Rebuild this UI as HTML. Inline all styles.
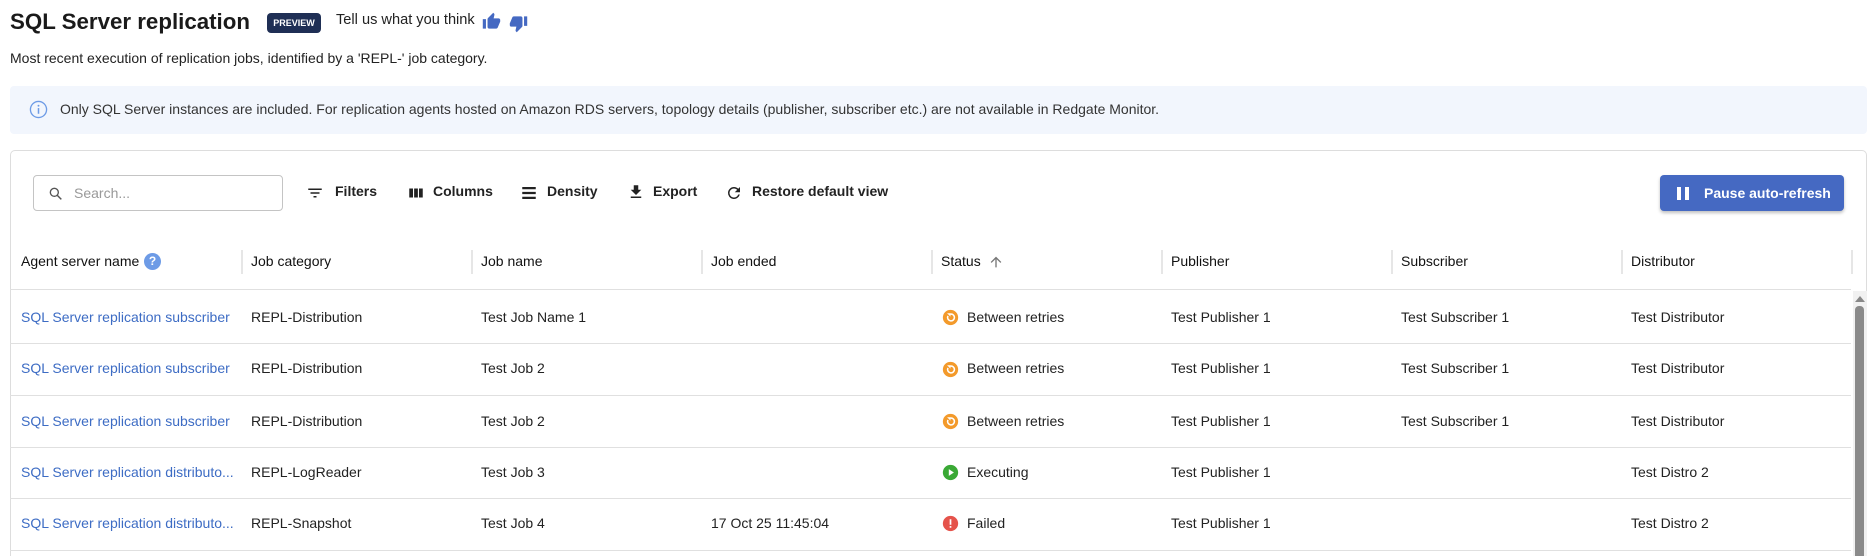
<!DOCTYPE html>
<html><head><meta charset="utf-8"><style>
*{box-sizing:border-box;margin:0;padding:0}
html{width:1869px;height:556px;overflow:hidden}
body{width:1869px;height:556px;overflow:hidden;background:#fff;font-family:"Liberation Sans",sans-serif;color:#222;position:relative}
.a{position:absolute;white-space:nowrap}
.title{left:10px;top:9px;font-size:22.3px;font-weight:bold;color:#1a1a1a}
.badge{left:267px;top:13px;width:54px;height:20px;background:#1f2f55;color:#fff;font-size:9px;font-weight:bold;border-radius:4px;text-align:center;line-height:20px}
.tell{left:336px;top:12px;font-size:14.6px;color:#222}
.sub{left:10px;top:50px;font-size:14px;color:#222}
.info{left:10px;top:86px;width:1857px;height:48px;background:#f2f6fd;border-radius:4px}
.info span{position:absolute;left:50px;top:15px;font-size:14px;color:#333}
.card{left:10px;top:150px;width:1857px;height:406px;border:1px solid #ddd;border-bottom:none;border-radius:5px 5px 0 0}
.search{left:33px;top:175px;width:250px;height:36px;border:1px solid #c4c4c4;border-radius:4px}
.search span{position:absolute;left:40px;top:9px;font-size:14px;color:#999}
.tb{top:183px;font-size:14px;font-weight:bold;color:#222}
.btn{left:1660px;top:175px;width:184px;height:36px;background:#4569c2;border-radius:4px;box-shadow:0 2px 3px rgba(0,0,0,.25);color:#fff;font-size:14px;font-weight:bold}
.hd{top:253px;font-size:14px;color:#111}
.sep{top:250px;width:2px;height:24px;background:#e6e6e6}
.hl{left:10px;width:1841px;height:1px;background:#e0e0e0}
.c{font-size:14px;color:#222}
.lnk{color:#3d6cc4}
</style></head><body>
<div class="a title">SQL Server replication</div>
<div class="a badge">PREVIEW</div>
<div class="a tell">Tell us what you think</div>
<svg class="a" style="left:482px;top:12px" width="19" height="19" viewBox="0 0 24 24"><path fill="#4569c2" d="M1 21h4V9H1v12zm22-11c0-1.1-.9-2-2-2h-6.3l1-4.6v-.3c0-.4-.2-.8-.4-1.1L14.2 1 7.6 7.6C7.2 8 7 8.5 7 9v10c0 1.1.9 2 2 2h9c.8 0 1.5-.5 1.8-1.2l3-7.1c.1-.2.2-.5.2-.7v-2z"/></svg>
<svg class="a" style="left:509px;top:14px" width="19" height="19" viewBox="0 0 24 24"><path fill="#4569c2" d="M15 3H6c-.8 0-1.5.5-1.8 1.2l-3 7.1c-.1.2-.2.5-.2.7v2c0 1.1.9 2 2 2h6.3l-1 4.6v.3c0 .4.2.8.4 1.1l1.1 1 6.6-6.6c.4-.4.6-.9.6-1.4V5c0-1.1-.9-2-2-2zm4 0v12h4V3h-4z"/></svg>
<div class="a sub">Most recent execution of replication jobs, identified by a 'REPL-' job category.</div>
<div class="a info"><svg style="position:absolute;left:19px;top:14px" width="19" height="19" viewBox="0 0 20 20"><circle cx="10" cy="10" r="8.5" fill="none" stroke="#6d9be6" stroke-width="1.4"/><rect x="9.2" y="8.5" width="1.6" height="6" fill="#6d9be6"/><circle cx="10" cy="6" r="1" fill="#6d9be6"/></svg><span>Only SQL Server instances are included. For replication agents hosted on Amazon RDS servers, topology details (publisher, subscriber etc.) are not available in Redgate Monitor.</span></div>
<div class="a card"></div>
<div class="a search"><svg style="position:absolute;left:14px;top:10px" width="16" height="16" viewBox="0 0 24 24"><circle cx="9.5" cy="9.5" r="6" fill="none" stroke="#555" stroke-width="2"/><path d="M14 14l6 6" stroke="#555" stroke-width="2.2"/></svg><span>Search...</span></div>
<svg class="a" style="left:306px;top:184px" width="18" height="18" viewBox="0 0 24 24"><path fill="#222" d="M3 6h18v2H3zM6 11h12v2H6zM10 16h4v2h-4z"/></svg>
<div class="a tb" style="left:335px">Filters</div>
<svg class="a" style="left:407px;top:184px" width="18" height="18" viewBox="0 0 24 24"><path fill="#222" d="M3 6h5v12H3zM9.5 6h5v12h-5zM16 6h5v12h-5z"/></svg>
<div class="a tb" style="left:433px">Columns</div>
<svg class="a" style="left:520px;top:184px" width="18" height="18" viewBox="0 0 24 24"><path fill="#222" d="M3 4h18v3H3zM3 10.5h18v3H3zM3 17h18v3H3z"/></svg>
<div class="a tb" style="left:547px">Density</div>
<svg class="a" style="left:627px;top:183px" width="18" height="18" viewBox="0 0 24 24"><path fill="#222" d="M19 9h-4V3H9v6H5l7 7 7-7zM5 18v2h14v-2z"/></svg>
<div class="a tb" style="left:653px">Export</div>
<svg class="a" style="left:725px;top:184px" width="18" height="18" viewBox="0 0 24 24"><path fill="#222" d="M17.65 6.35A7.96 7.96 0 0 0 12 4a8 8 0 1 0 7.730 10h-2.08A6 6 0 1 1 12 6c1.66 0 3.14.69 4.22 1.78L13 11h7V4l-2.35 2.35z"/></svg>
<div class="a tb" style="left:752px">Restore default view</div>
<div class="a btn"><span style="position:absolute;left:17px;top:12px;width:4px;height:13px;background:#fff"></span><span style="position:absolute;left:25px;top:12px;width:4px;height:13px;background:#fff"></span><span style="position:absolute;left:44px;top:10px">Pause auto-refresh</span></div>

<div class="a hd" style="left:21px">Agent server name</div>
<div class="a" style="left:144px;top:253px;width:17px;height:17px;border-radius:50%;background:#6d9be6;color:#fff;font-size:12px;font-weight:bold;text-align:center;line-height:17px">?</div>
<div class="a sep" style="left:241px"></div><div class="a hd" style="left:251px">Job category</div>
<div class="a sep" style="left:471px"></div><div class="a hd" style="left:481px">Job name</div>
<div class="a sep" style="left:701px"></div><div class="a hd" style="left:711px">Job ended</div>
<div class="a sep" style="left:931px"></div><div class="a hd" style="left:941px">Status</div>
<svg class="a" style="left:988px;top:254px" width="16" height="16" viewBox="0 0 24 24"><path fill="#777" d="M4 12l1.4 1.4L11 7.8V20h2V7.8l5.6 5.6L20 12l-8-8z"/></svg>
<div class="a sep" style="left:1161px"></div><div class="a hd" style="left:1171px">Publisher</div>
<div class="a sep" style="left:1391px"></div><div class="a hd" style="left:1401px">Subscriber</div>
<div class="a sep" style="left:1621px"></div><div class="a hd" style="left:1631px">Distributor</div>
<div class="a sep" style="left:1851px"></div>
<div class="a hl" style="top:289px"></div>
<div class="a hl" style="top:343px"></div>
<div class="a hl" style="top:395px"></div>
<div class="a hl" style="top:447px"></div>
<div class="a hl" style="top:498px"></div>
<div class="a hl" style="top:550px"></div>
<div class="a" style="left:1853px;top:291px;width:14px;height:265px;background:#f1f1f1"></div>
<div class="a" style="left:1855px;top:296px;width:0;height:0;border-left:5px solid transparent;border-right:5px solid transparent;border-bottom:6px solid #888"></div>
<div class="a" style="left:1855px;top:306px;width:9px;height:250px;background:#8a8a8a;border-radius:4px 4px 0 0"></div>

<div class="a c lnk" style="left:21px;top:309px">SQL Server replication subscriber</div>
<div class="a c" style="left:251px;top:309px">REPL-Distribution</div>
<div class="a c" style="left:481px;top:309px">Test Job Name 1</div>
<div class="a c" style="left:967px;top:309px">Between retries</div>
<div class="a c" style="left:1171px;top:309px">Test Publisher 1</div>
<div class="a c" style="left:1401px;top:309px">Test Subscriber 1</div>
<div class="a c" style="left:1631px;top:309px">Test Distributor</div>

<div class="a c lnk" style="left:21px;top:360px">SQL Server replication subscriber</div>
<div class="a c" style="left:251px;top:360px">REPL-Distribution</div>
<div class="a c" style="left:481px;top:360px">Test Job 2</div>
<div class="a c" style="left:967px;top:360px">Between retries</div>
<div class="a c" style="left:1171px;top:360px">Test Publisher 1</div>
<div class="a c" style="left:1401px;top:360px">Test Subscriber 1</div>
<div class="a c" style="left:1631px;top:360px">Test Distributor</div>

<div class="a c lnk" style="left:21px;top:413px">SQL Server replication subscriber</div>
<div class="a c" style="left:251px;top:413px">REPL-Distribution</div>
<div class="a c" style="left:481px;top:413px">Test Job 2</div>
<div class="a c" style="left:967px;top:413px">Between retries</div>
<div class="a c" style="left:1171px;top:413px">Test Publisher 1</div>
<div class="a c" style="left:1401px;top:413px">Test Subscriber 1</div>
<div class="a c" style="left:1631px;top:413px">Test Distributor</div>

<div class="a c lnk" style="left:21px;top:464px">SQL Server replication distributo...</div>
<div class="a c" style="left:251px;top:464px">REPL-LogReader</div>
<div class="a c" style="left:481px;top:464px">Test Job 3</div>
<div class="a c" style="left:967px;top:464px">Executing</div>
<div class="a c" style="left:1171px;top:464px">Test Publisher 1</div>
<div class="a c" style="left:1631px;top:464px">Test Distro 2</div>

<div class="a c lnk" style="left:21px;top:515px">SQL Server replication distributo...</div>
<div class="a c" style="left:251px;top:515px">REPL-Snapshot</div>
<div class="a c" style="left:481px;top:515px">Test Job 4</div>
<div class="a c" style="left:711px;top:515px">17 Oct 25 11:45:04</div>
<div class="a c" style="left:967px;top:515px">Failed</div>
<div class="a c" style="left:1171px;top:515px">Test Publisher 1</div>
<div class="a c" style="left:1631px;top:515px">Test Distro 2</div>

<svg class="a" style="left:942px;top:309px" width="17" height="17" viewBox="0 0 20 20"><circle cx="10" cy="10" r="9" fill="#f39a2b"/><path d="M7 8.2A4 4 0 1 0 10 6" fill="none" stroke="#fff" stroke-width="1.8"/><path d="M6 5h4v4z" fill="#fff"/></svg>
<svg class="a" style="left:942px;top:361px" width="17" height="17" viewBox="0 0 20 20"><circle cx="10" cy="10" r="9" fill="#f39a2b"/><path d="M7 8.2A4 4 0 1 0 10 6" fill="none" stroke="#fff" stroke-width="1.8"/><path d="M6 5h4v4z" fill="#fff"/></svg>
<svg class="a" style="left:942px;top:413px" width="17" height="17" viewBox="0 0 20 20"><circle cx="10" cy="10" r="9" fill="#f39a2b"/><path d="M7 8.2A4 4 0 1 0 10 6" fill="none" stroke="#fff" stroke-width="1.8"/><path d="M6 5h4v4z" fill="#fff"/></svg>
<svg class="a" style="left:942px;top:464px" width="17" height="17" viewBox="0 0 20 20"><circle cx="10" cy="10" r="9" fill="#3aa935"/><path d="M8 6v8l6-4z" fill="#fff"/></svg>
<svg class="a" style="left:942px;top:515px" width="17" height="17" viewBox="0 0 20 20"><circle cx="10" cy="10" r="9" fill="#e5534b"/><rect x="9" y="5" width="2" height="6.5" fill="#fff"/><rect x="9" y="13" width="2" height="2" fill="#fff"/></svg>
</body></html>
